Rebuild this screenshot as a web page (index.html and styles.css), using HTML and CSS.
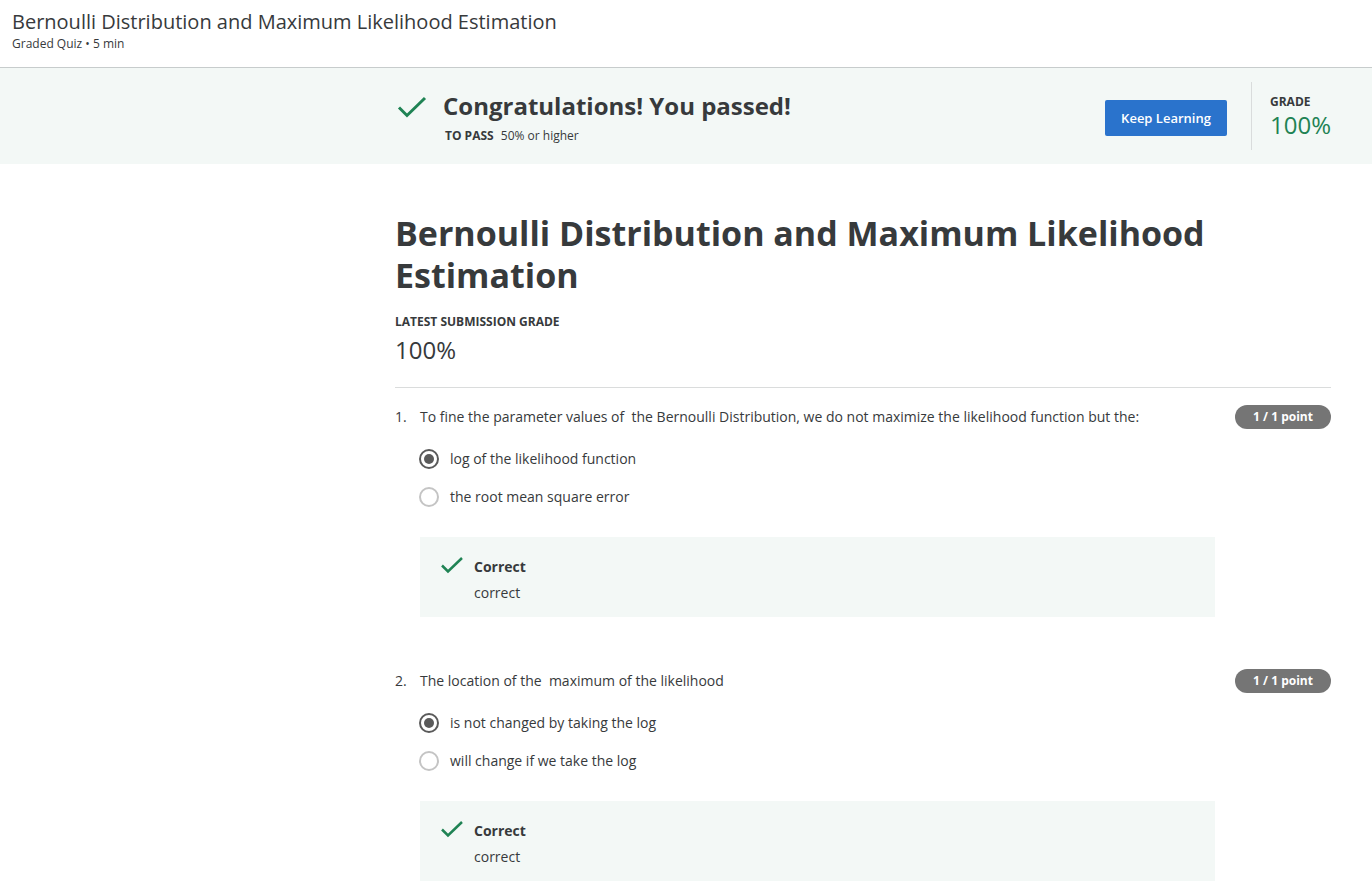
FILE: index.html
```html
<!DOCTYPE html>
<html>
<head>
<meta charset="utf-8">
<link rel="stylesheet" href="styles.css">
</head>
<body>
<header class="top">
  <div class="top-title">Bernoulli Distribution and Maximum Likelihood Estimation</div>
  <div class="top-sub">Graded Quiz • 5 min</div>
</header>
<section class="banner">
  <div class="banner-inner">
    <div class="pass">
      <svg class="pass-check" width="30" height="24" viewBox="0 0 30 24"><path d="M2 12.5 L10 20.5 L28 3" fill="none" stroke="#1f8354" stroke-width="3"/></svg>
      <div class="pass-text">
        <div class="pass-title">Congratulations! You passed!</div>
        <div class="pass-sub"><b>TO PASS</b> 50% or higher</div>
      </div>
    </div>
    <button class="keep">Keep Learning</button>
    <div class="grade">
      <div class="grade-label">GRADE</div>
      <div class="grade-value">100%</div>
    </div>
  </div>
</section>
<main class="content">
  <h1 class="quiz-title">Bernoulli Distribution and Maximum Likelihood Estimation</h1>
  <div class="latest-label">LATEST SUBMISSION GRADE</div>
  <div class="latest-value">100%</div>
  <hr class="divider">

  <div class="question">
    <div class="q-head">
      <span class="q-num">1.</span>
      <span class="q-text">To fine the parameter values of&nbsp; the Bernoulli Distribution, we do not maximize the likelihood function but the:</span>
      <span class="badge">1 / 1 point</span>
    </div>
    <div class="options">
      <div class="option"><span class="radio checked"></span><span>log of the likelihood function</span></div>
      <div class="option"><span class="radio"></span><span>the root mean square error</span></div>
    </div>
    <div class="feedback">
      <svg class="fb-check" width="24" height="20" viewBox="0 0 24 20"><path d="M2 9.5 L8 15.5 L22 2" fill="none" stroke="#1f8354" stroke-width="2.5"/></svg>
      <div>
        <div class="fb-title">Correct</div>
        <div class="fb-text">correct</div>
      </div>
    </div>
  </div>

  <div class="question">
    <div class="q-head">
      <span class="q-num">2.</span>
      <span class="q-text">The location of the&nbsp; maximum of the likelihood</span>
      <span class="badge">1 / 1 point</span>
    </div>
    <div class="options">
      <div class="option"><span class="radio checked"></span><span>is not changed by taking the log</span></div>
      <div class="option"><span class="radio"></span><span>will change if we take the log</span></div>
    </div>
    <div class="feedback">
      <svg class="fb-check" width="24" height="20" viewBox="0 0 24 20"><path d="M2 9.5 L8 15.5 L22 2" fill="none" stroke="#1f8354" stroke-width="2.5"/></svg>
      <div>
        <div class="fb-title">Correct</div>
        <div class="fb-text">correct</div>
      </div>
    </div>
  </div>
</main>
</body>
</html>
```

FILE: styles.css
```css
* { box-sizing: border-box; }
html, body { margin: 0; padding: 0; }
body {
  font-family: "Open Sans", "Noto Sans", sans-serif;
  color: #373a3c;
  background: #fff;
  width: 1372px;
  height: 890px;
  overflow: hidden;
}
.top {
  height: 68px;
  padding: 8px 12px 0;
  border-bottom: 1px solid #c7cccc;
}
.top-title {
  font-size: 20px;
  line-height: 28px;
  color: #373a3c;
}
.top-sub {
  font-size: 12px;
  line-height: 16px;
  color: #373a3c;
}
.banner {
  background: #f3f8f6;
  height: 96px;
}
.banner-inner {
  margin-left: 395px;
  width: 936px;
  height: 96px;
  display: flex;
  align-items: center;
}
.pass {
  display: flex;
  align-items: flex-start;
  flex: 1;
  padding-top: 2px;
}
.pass-check {
  margin: 5px 0 0 2px;
  flex-shrink: 0;
}
.pass-text { margin-left: 16px; }
.pass-title {
  font-size: 24px;
  font-weight: 700;
  line-height: 32px;
  color: #373a3c;
}
.pass-sub {
  font-size: 12px;
  line-height: 16px;
  margin-top: 6px;
  margin-left: 2px;
}
.pass-sub b { margin-right: 4px; }
.keep {
  background: #2a73cc;
  color: #fff;
  border: none;
  border-radius: 2px;
  width: 122px;
  height: 36px;
  font-family: inherit;
  font-size: 13px;
  font-weight: 600;
  padding: 0;
  margin-right: 24px;
  margin-top: 4px;
}
.grade {
  border-left: 1px solid #d9dcdc;
  height: 68px;
  padding-left: 18px;
  width: 80px;
  padding-top: 13px;
}
.grade-label {
  font-size: 12px;
  font-weight: 700;
  line-height: 14px;
}
.grade-value {
  font-size: 24px;
  line-height: 32px;
  color: #1f8354;
}
.content {
  margin-left: 395px;
  width: 936px;
  padding-top: 48px;
}
.quiz-title {
  font-size: 34px;
  font-weight: 700;
  line-height: 42px;
  margin: 0;
  width: 860px;
  color: #373a3c;
}
.latest-label {
  font-size: 12px;
  font-weight: 700;
  line-height: 16px;
  margin-top: 18px;
}
.latest-value {
  font-size: 24px;
  line-height: 32px;
  margin-top: 4px;
}
.divider {
  border: none;
  border-top: 1px solid #dadcdc;
  margin: 21px 0 0;
}
.question { padding-top: 17px; margin-bottom: 35px; }
.q-head {
  display: flex;
  align-items: center;
  font-size: 14px;
  line-height: 24px;
}
.q-num { width: 25px; }
.q-text { flex: 1; }
.badge {
  background: #757575;
  color: #fff;
  font-size: 12px;
  font-weight: 700;
  border-radius: 12px;
  height: 24px;
  line-height: 24px;
  width: 96px;
  text-align: center;
}
.options {
  margin-left: 24px;
  margin-top: 20px;
  display: flex;
  flex-direction: column;
  gap: 18px;
}
.option {
  display: flex;
  align-items: center;
  font-size: 14px;
  line-height: 20px;
}
.radio {
  width: 20px;
  height: 20px;
  border-radius: 50%;
  border: 2px solid #c4c4c4;
  margin-right: 11px;
  position: relative;
  flex-shrink: 0;
}
.radio.checked { border-color: #5a5a5a; }
.radio.checked::after {
  content: "";
  position: absolute;
  left: 3px;
  top: 3px;
  width: 10px;
  height: 10px;
  border-radius: 50%;
  background: #5a5a5a;
}
.feedback {
  margin: 30px 0 0 25px;
  width: 795px;
  background: #f3f8f6;
  padding: 18px 20px 12px;
  display: flex;
  align-items: flex-start;
}
.fb-check { margin-top: 1px; flex-shrink: 0; }
.feedback > div { margin-left: 10px; }
.fb-title {
  font-size: 14px;
  font-weight: 700;
  line-height: 24px;
}
.fb-text {
  font-size: 14px;
  line-height: 24px;
  margin-top: 2px;
}
```
